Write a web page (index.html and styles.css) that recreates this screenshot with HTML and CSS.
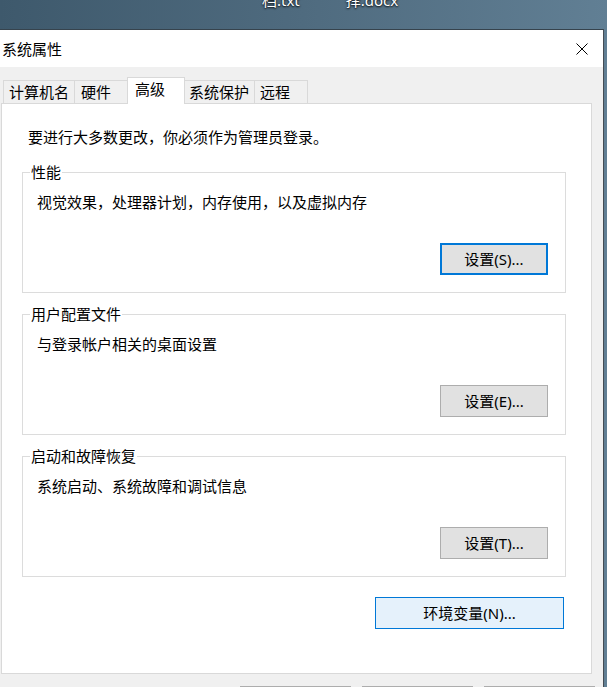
FILE: index.html
```html
<!DOCTYPE html>
<html lang="zh-CN">
<head>
<meta charset="utf-8">
<title>系统属性</title>
<link rel="stylesheet" href="styles.css">
</head>
<body>
<div class="desktop">
  <span class="icon-label">档.txt</span>
  <span class="icon-label">择.docx</span>
</div>
<div class="window">
  <div class="titlebar">
    <span class="title">系统属性</span>
    <svg class="close" width="12" height="12" viewBox="0 0 12 12"><path d="M0.5 0.5L11.5 11.5M11.5 0.5L0.5 11.5" stroke="#000" stroke-width="1" fill="none"/></svg>
  </div>
  <div class="client">
    <div class="tabs">
      <div class="tab tab-1">计算机名</div>
      <div class="tab tab-2">硬件</div>
      <div class="tab tab-3 active">高级</div>
      <div class="tab tab-4">系统保护</div>
      <div class="tab tab-5">远程</div>
    </div>
    <div class="panel">
      <p class="intro">要进行大多数更改，你必须作为管理员登录。</p>
      <div class="group group-first">
        <div class="group-label">性能</div>
        <div class="group-text">视觉效果，处理器计划，内存使用，以及虚拟内存</div>
        <button class="btn btn-default">设置(S)...</button>
      </div>
      <div class="group">
        <div class="group-label">用户配置文件</div>
        <div class="group-text">与登录帐户相关的桌面设置</div>
        <button class="btn">设置(E)...</button>
      </div>
      <div class="group">
        <div class="group-label">启动和故障恢复</div>
        <div class="group-text">系统启动、系统故障和调试信息</div>
        <button class="btn">设置(T)...</button>
      </div>
      <div class="env-row">
        <button class="btn btn-env">环境变量(N)...</button>
      </div>
    </div>
    <div class="footer">
      <button class="btn btn-footer">确定</button>
      <button class="btn btn-footer">取消</button>
      <button class="btn btn-footer">应用(A)</button>
    </div>
  </div>
</div>
</body>
</html>
```
FILE: styles.css
```css
html, body {
  margin: 0;
  padding: 0;
  width: 607px;
  height: 687px;
  overflow: hidden;
}

body {
  background: linear-gradient(90deg, #3e596c 0%, #4f6b7f 50%, #617f94 100%);
  font-family: "Noto Sans", "Noto Sans CJK SC", sans-serif;
  font-size: 15px;
  color: #000;
}

.desktop {
  height: 29px;
  box-sizing: border-box;
  display: flex;
  gap: 46px;
  padding-left: 262px;
  overflow: hidden;
}

.icon-label {
  color: #fff;
  line-height: 20px;
  margin-top: -10px;
  text-shadow: 0 1px 2px rgba(0, 0, 0, 0.85), 0 0 2px rgba(0, 0, 0, 0.6);
}

.window {
  width: 604px;
  height: 658px;
  box-sizing: border-box;
  border-top: 1px solid #36434d;
  border-right: 1px solid #454c53;
  background: #f0f0f0;
}

.titlebar {
  height: 37px;
  background: #fff;
  display: flex;
  align-items: center;
  justify-content: space-between;
  padding: 0 15px 0 2px;
}

.title {
  line-height: 20px;
}

.close {
  display: block;
}

.tabs {
  height: 36px;
  box-sizing: border-box;
  display: flex;
  align-items: flex-end;
  padding-left: 3px;
}

.tab {
  height: 23px;
  box-sizing: border-box;
  border: 1px solid #d9d9d9;
  border-bottom: none;
  background: #f0f0f0;
  line-height: 22px;
  padding-left: 5px;
  margin-left: -1px;
  white-space: nowrap;
}

.tab-1 { width: 72px; margin-left: 0; }
.tab-2 { width: 54px; padding-left: 6px; }
.tab-3 { width: 58px; }
.tab-4 { width: 71px; padding-left: 4px; }
.tab-5 { width: 54px; }

.tab.active {
  height: 27px;
  background: #fff;
  margin-bottom: -1px;
  padding-left: 7px;
  position: relative;
  z-index: 1;
}

.panel {
  margin-left: 1px;
  width: 591px;
  height: 571px;
  box-sizing: border-box;
  border: 1px solid #d9d9d9;
  background: #fff;
  padding: 23px 25px 0 20px;
}

.intro {
  margin: 0 0 0 6px;
  line-height: 20px;
}

.group {
  height: 121px;
  box-sizing: border-box;
  margin-top: 21px;
  border: 1px solid #dcdcdc;
  display: flex;
  flex-direction: column;
  padding: 0 17px 17px 14px;
}

.group-first {
  margin-top: 25px;
}

.group-label {
  align-self: flex-start;
  margin: -11px 0 0 -7px;
  padding: 0 1px;
  background: #fff;
  line-height: 20px;
}

.group-text {
  margin-top: 10px;
  line-height: 20px;
}

.btn {
  font-family: inherit;
  font-size: 15px;
  color: #000;
  width: 108px;
  height: 32px;
  box-sizing: border-box;
  padding: 0;
  background: #e1e1e1;
  border: 1px solid #adadad;
  border-radius: 0;
  line-height: 20px;
}

.group .btn {
  margin-top: auto;
  align-self: flex-end;
}

.btn-default {
  border: 2px solid #0078d7;
}

.env-row {
  display: flex;
  justify-content: flex-end;
  margin-top: 20px;
  padding-right: 2px;
}

.btn-env {
  width: 189px;
  background: #e5f1fb;
  border-color: #0078d7;
}

.footer {
  display: flex;
  gap: 11px;
  padding-left: 240px;
  margin-top: 12px;
}

.btn-footer {
  width: 111px;
  height: 30px;
}
```
